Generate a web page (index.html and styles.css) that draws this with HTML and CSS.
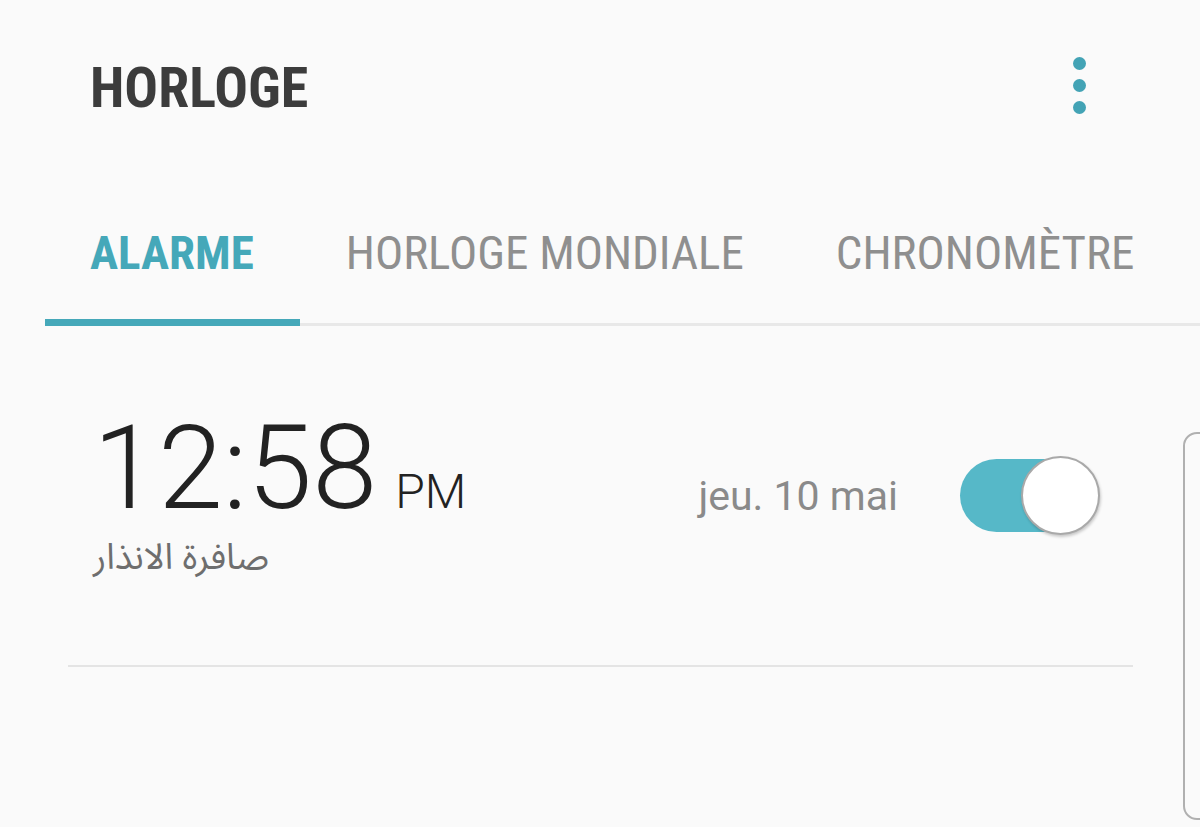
FILE: index.html
```html
<!DOCTYPE html>
<html lang="fr">
<head>
  <meta charset="UTF-8">
  <title>Horloge</title>
  <link rel="stylesheet" href="styles.css">
</head>
<body>
  <div class="app-bar">
    <h1 class="title">HORLOGE</h1>
    <div class="more">
      <span class="dot"></span>
      <span class="dot"></span>
      <span class="dot"></span>
    </div>
  </div>

  <!-- Tabs -->
  <div class="tabs">
    <div class="tab active">ALARME</div>
    <div class="tab">HORLOGE MONDIALE</div>
    <div class="tab">CHRONOMÈTRE</div>
  </div>

  <!-- Alarm list -->
  <div class="alarm">
    <div class="alarm-left">
      <div class="time">12:58<span class="ampm">PM</span></div>
      <div class="label" dir="rtl">صافرة الانذار</div>
    </div>
    <div class="date">jeu. 10 mai</div>
    <div class="switch">
      <span class="track"></span>
      <span class="thumb"></span>
    </div>
  </div>

  <div class="edge-card"></div>
</body>
</html>
```

FILE: styles.css
```css
body {
  margin: 0;
  background: #fafafa;
  font-family: Roboto, 'Noto Sans', sans-serif;
  color: #222;
  position: relative;
  height: 827px;
  overflow: hidden;
}
.app-bar {
  display: flex;
  justify-content: space-between;
  align-items: center;
  height: 176px;
  padding: 0 114px 0 90px;
}
.title {
  margin: 0;
  font-family: 'Roboto Condensed', Roboto, sans-serif;
  font-stretch: condensed;
  font-size: 56px;
  font-weight: 700;
  line-height: 1;
  color: #3c3c3c;
}
.more {
  display: flex;
  flex-direction: column;
  gap: 9px;
  margin-top: -6px;
}
.dot {
  width: 13px;
  height: 13px;
  border-radius: 50%;
  background: #43a3b5;
}
.tabs {
  display: flex;
  margin: 53px 0 0 45px;
  border-bottom: 3px solid #e8e8e8;
}
.tab {
  padding: 0 46px 47px;
  font-family: 'Roboto Condensed', Roboto, sans-serif;
  font-stretch: condensed;
  font-size: 47px;
  line-height: 1;
  white-space: nowrap;
  color: #8f8f8f;
}
.tab:first-child {
  padding-left: 45px;
}
.tab.active {
  margin-bottom: -3px;
  padding-bottom: 43px;
  border-bottom: 7px solid #45a8b9;
  color: #45a8b9;
  font-weight: 700;
}
.alarm {
  display: flex;
  align-items: center;
  margin: 0 67px 0 68px;
  padding: 84px 33px 84px 25px;
  border-bottom: 2px solid #e4e4e4;
}
.alarm-left {
  flex: 1;
}
.time {
  font-size: 117px;
  font-weight: 300;
  line-height: 1;
  color: #222;
}
.ampm {
  margin-left: 18px;
  font-size: 48px;
}
.label {
  margin-top: 8px;
  text-align: left;
  font-family: 'Noto Sans Arabic', 'DejaVu Sans', sans-serif;
  font-size: 36px;
  line-height: 46px;
  color: #6e6e6e;
}
.date {
  font-size: 41px;
  color: #8a8a8a;
  margin-right: 62px;
}
.switch {
  position: relative;
  width: 140px;
  height: 79px;
}
.track {
  position: absolute;
  left: 0;
  top: 3px;
  width: 120px;
  height: 73px;
  border-radius: 37px;
  background: #56b8c8;
}
.thumb {
  position: absolute;
  right: 0;
  top: 0;
  width: 75px;
  height: 75px;
  border: 2px solid #a9a9a9;
  border-radius: 50%;
  background: #fff;
  box-shadow: 1px 2px 3px rgba(0, 0, 0, 0.2);
}
.edge-card {
  position: absolute;
  left: 1183px;
  top: 432px;
  width: 40px;
  height: 384px;
  border: 2px solid #b0b0b0;
  border-radius: 14px;
}
```
